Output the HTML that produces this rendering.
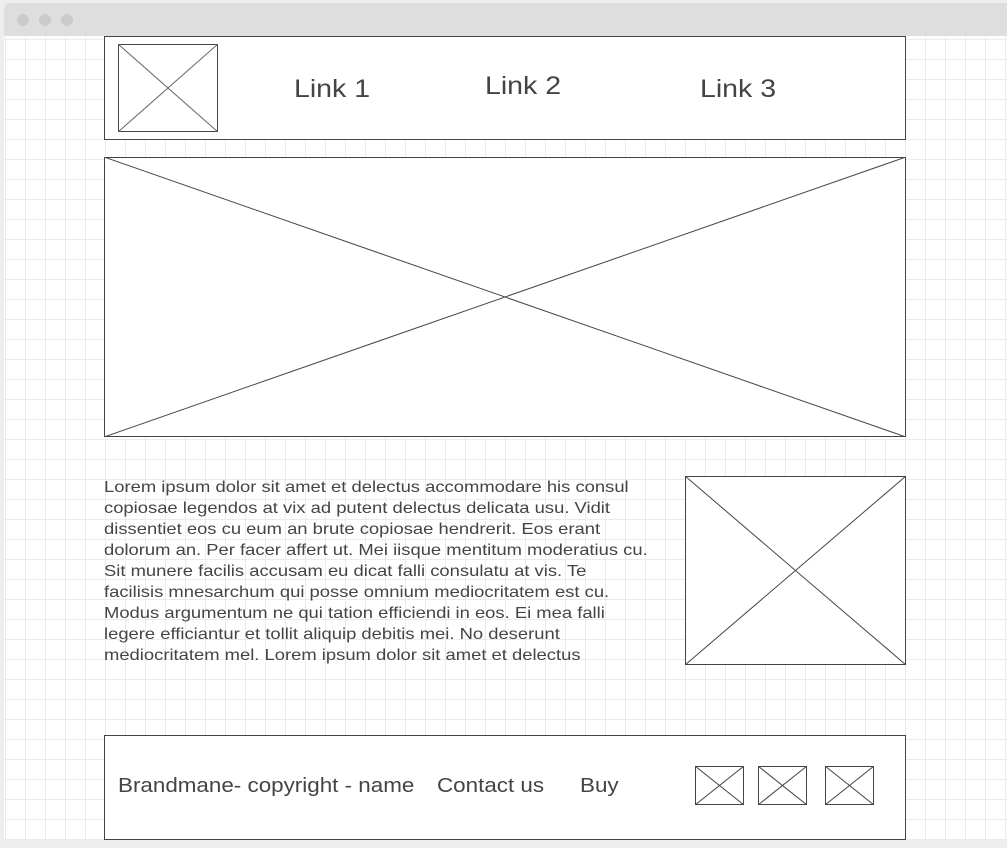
<!DOCTYPE html>
<html><head><meta charset="utf-8"><style>
body{margin:0;width:1007px;height:848px;background:#eeeeee;position:relative;overflow:hidden;font-family:"Liberation Sans",sans-serif;color:#444;}
.win{position:absolute;left:4px;top:3px;width:1010px;height:837px;background:#fff;border-radius:6px 0 0 0;overflow:hidden;}
.bar{position:absolute;left:0;top:0;right:0;height:33px;background:#dedede;}
.dot{position:absolute;top:11px;width:12px;height:12px;border-radius:50%;background:#cbcbcb;}
.grid{position:absolute;left:0;top:33px;right:0;bottom:0;background-color:#fff;
background-image:linear-gradient(to right,#ebebeb 1px,transparent 1px),linear-gradient(to bottom,#ebebeb 1px,transparent 1px);
background-size:20px 20px;background-position:1px 3px;}
.box{position:absolute;border:1px solid #444;background:#fff;box-sizing:border-box;}
svg{position:absolute;}
.t{position:absolute;white-space:nowrap;transform-origin:0 0;transform:scaleX(1.14);}
</style></head><body>
<div class="win"><div class="bar"></div>
<div class="dot" style="left:13px"></div><div class="dot" style="left:35px"></div><div class="dot" style="left:57px"></div>
<div class="grid"></div></div>

<div class="box" style="left:104px;top:36px;width:802px;height:104px"></div>
<svg style="left:118px;top:44px" width="100" height="88"><rect x="0.5" y="0.5" width="99" height="87" fill="#fff" stroke="#444"/><path d="M0 0L100 88M100 0L0 88" stroke="#666" stroke-width="1"/></svg>
<div class="t" style="left:294px;top:75px;font-size:25px">Link 1</div>
<div class="t" style="left:485px;top:72px;font-size:25px">Link 2</div>
<div class="t" style="left:700px;top:75px;font-size:25px">Link 3</div>

<svg style="left:104px;top:157px" width="802" height="280"><rect x="0.5" y="0.5" width="801" height="279" fill="#fff" stroke="#444"/><path d="M0 0L802 280M802 0L0 280" stroke="#444" stroke-width="1"/></svg>

<div class="t" style="left:104px;top:477px;font-size:16px;line-height:21px;transform:scaleX(1.15)">Lorem ipsum dolor sit amet et delectus accommodare his consul<br>copiosae legendos at vix ad putent delectus delicata usu. Vidit<br>dissentiet eos cu eum an brute copiosae hendrerit. Eos erant<br>dolorum an. Per facer affert ut. Mei iisque mentitum moderatius cu.<br>Sit munere facilis accusam eu dicat falli consulatu at vis. Te<br>facilisis mnesarchum qui posse omnium mediocritatem est cu.<br>Modus argumentum ne qui tation efficiendi in eos. Ei mea falli<br>legere efficiantur et tollit aliquip debitis mei. No deserunt<br>mediocritatem mel. Lorem ipsum dolor sit amet et delectus</div>

<svg style="left:685px;top:476px" width="221" height="189"><rect x="0.5" y="0.5" width="220" height="188" fill="#fff" stroke="#444"/><path d="M0 0L221 189M221 0L0 189" stroke="#444" stroke-width="1"/></svg>

<div class="box" style="left:104px;top:735px;width:802px;height:105px"></div>
<div class="t" style="left:118px;top:775px;font-size:20px;transform:scaleX(1.12)">Brandmane- copyright - name</div>
<div class="t" style="left:437px;top:775px;font-size:20px;transform:scaleX(1.12)">Contact us</div>
<div class="t" style="left:580px;top:775px;font-size:20px;transform:scaleX(1.12)">Buy</div>
<svg style="left:695px;top:766px" width="49" height="39"><rect x="0.5" y="0.5" width="48" height="38" fill="#fff" stroke="#444"/><path d="M0 0L49 39M49 0L0 39" stroke="#444"/></svg>
<svg style="left:758px;top:766px" width="49" height="39"><rect x="0.5" y="0.5" width="48" height="38" fill="#fff" stroke="#444"/><path d="M0 0L49 39M49 0L0 39" stroke="#444"/></svg>
<svg style="left:825px;top:766px" width="49" height="39"><rect x="0.5" y="0.5" width="48" height="38" fill="#fff" stroke="#444"/><path d="M0 0L49 39M49 0L0 39" stroke="#444"/></svg>
</body></html>
